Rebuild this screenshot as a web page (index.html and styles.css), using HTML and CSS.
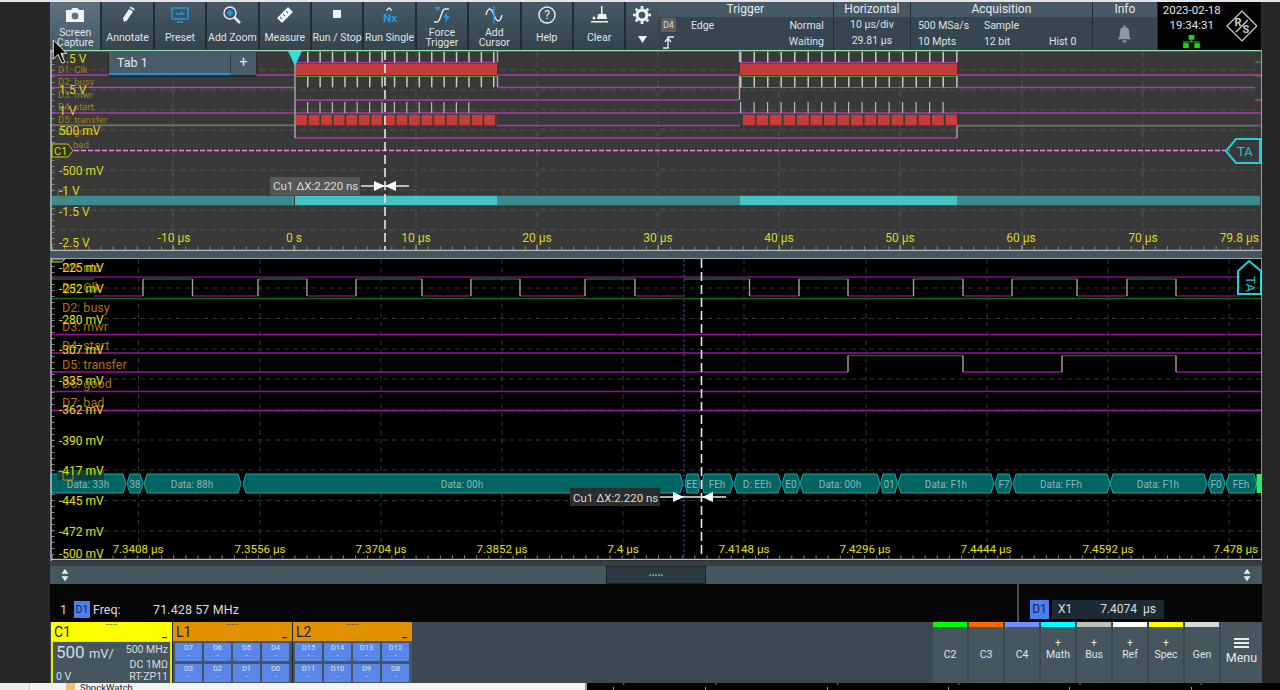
FILE: index.html
```html
<!DOCTYPE html>
<html lang="en">
<head>
<meta charset="utf-8">
<title>Oscilloscope</title>
<link rel="stylesheet" href="styles.css">
</head>
<body>
<div class="screen">
  <div class="topline"></div>
  <div class="middle">
    <main class="scope">
      <header class="toolbar">
        <button class="tool active"><svg class="ico" viewBox="0 0 20 18"><path class="fw" d="M1 4h5l1.500-2h5L14 4h5v12H1z"/><circle cx="10" cy="10" r="4" class="hole"/></svg><span>Screen<br>Capture</span></button>
        <button class="tool"><svg class="ico" viewBox="0 0 20 18"><path class="fw" d="M6 16l-1-4 6-9 4 2.500-6 9zM11.800 2l1-1.500 4 2.500-1 1.500z"/></svg><span class="one">Annotate</span></button>
        <button class="tool"><svg class="ico" viewBox="0 0 20 18"><rect x="2" y="2" width="16" height="11" rx="1" class="bl"/><path class="bl" d="M7 16h6M6 8h7l-2-2"/></svg><span class="one">Preset</span></button>
        <button class="tool"><svg class="ico" viewBox="0 0 20 18"><circle cx="8" cy="7" r="6" class="wl"/><path class="wl thick" d="M12 11l6 6"/><path class="bl thick" d="M5 7h6M8 4v6"/></svg><span class="one">Add Zoom</span></button>
        <button class="tool"><svg class="ico" viewBox="0 0 20 18"><path class="fw" d="M2 12L13 1l5 5L7 17z"/><path class="dk" d="M5 11l2 2M8 8l2 2M11 5l2 2"/></svg><span class="one">Measure</span></button>
        <button class="tool"><svg class="ico" viewBox="0 0 20 18"><rect x="6" y="4" width="8" height="8" class="fw"/></svg><span class="one">Run / Stop</span></button>
        <button class="tool"><svg class="ico" viewBox="0 0 20 20"><path class="wl" d="M6 5l3-3 3 3"/><text x="10" y="18" class="nx">Nx</text></svg><span class="one">Run Single</span></button>
        <button class="tool"><svg class="ico" viewBox="0 0 20 18"><path class="wl" d="M2 16h3c4 0 4-13 8-13h4"/><path class="bf" d="M2 1h7L5.500 5zM15 6l-4 6h3l-1 5 5-7h-3z"/></svg><span>Force<br>Trigger</span></button>
        <button class="tool"><svg class="ico" viewBox="0 0 20 18"><path class="wl" d="M2 9c2-8 5-8 8 0s6 8 8 0"/><path class="bl" d="M10 0v18"/></svg><span>Add<br>Cursor</span></button>
        <button class="tool"><svg class="ico" viewBox="0 0 20 18"><circle cx="10" cy="9" r="8" class="wl"/><text x="10" y="13" class="qm">?</text></svg><span class="one">Help</span></button>
        <button class="tool"><svg class="ico" viewBox="0 0 20 18"><path class="fw" d="M12 0h1.500v8H17l1 5H8l1-5h3zM2 15h17v1.500H2z"/><circle cx="5" cy="12" r="1.500" class="fw"/></svg><span class="one">Clear</span></button>
        <div class="gear">
          <svg class="gear-ico" viewBox="0 0 20 20"><circle cx="10" cy="10" r="5.500" class="gear-ring"/><path class="gear-teeth" d="M10 0v20M0 10h20M3 3l14 14M17 3L3 17"/></svg>
          <svg class="tri-ico" viewBox="0 0 12 10"><path class="fw" d="M1 1h10L6 9z"/></svg>
        </div>
        <section class="status w-trigger">
          <h2>Trigger</h2>
          <div class="trig-body">
            <span class="d4">D4</span><span>Edge</span><span class="right">Normal</span>
            <svg class="edge-ico" viewBox="0 0 14 14"><path class="wl" d="M1 13h5V2h6M3 7l3-4 3 4"/></svg><span></span><span class="right">Waiting</span>
          </div>
        </section>
        <section class="status w-horiz">
          <h2>Horizontal</h2>
          <div class="stack"><span>10 µs/div</span><span>29.81 µs</span></div>
        </section>
        <section class="status w-acq">
          <h2>Acquisition</h2>
          <div class="acq-body">
            <span>500 MSa/s</span><span>Sample</span><span></span>
            <span>10 Mpts</span><span>12 bit</span><span>Hist 0</span>
          </div>
        </section>
        <section class="status w-info">
          <h2>Info</h2>
          <svg class="bell" viewBox="0 0 16 20"><path class="grey" d="M1 15c2-2 2-5 2-8 0-3 2-5 5-5s5 2 5 5c0 3 0 6 2 8zM6 16h4v2.500H6zM7 0h2v3H7z"/></svg>
        </section>
        <section class="clock">
          <div class="clock-text">
            <span>2023-02-18</span><span>19:34:31</span>
            <svg class="net" viewBox="0 0 18 14"><path class="gn" d="M6 0h6v5H6zM0 9h6v5H0zM12 9h6v5h-6z"/><path class="gl" d="M9 5v2M0 7.500h18M3 8v2M15 8v2"/></svg>
          </div>
          <svg class="rs" viewBox="0 0 32 32"><path class="logo-line" d="M16 1l15 15-15 15L1 16z"/><text x="12" y="16" class="logo-t">R</text><text x="20" y="23" class="logo-t">S</text><path class="logo-line" d="M10 22L22 10"/></svg>
        </section>
      </header>

      <div class="overview-wrap">
        <svg class="plot overview" viewBox="50 50 1212 201">
          <rect x="50" y="50" width="1212" height="201" class="bg-grey"/>
          <path class="grid-o" d="M50 70h1212M50 90h1212M50 110h1212M50 130h1212M50 170h1212M50 190h1212M50 210h1212M50 230h1212M173 51v199M416 51v199M537 51v199M658 51v199M779 51v199M900 51v199M1022 51v199M1143 51v199"/>
          <path class="ruler-o" d="M52 248H1262"/>
          <path class="ticks-left" d="M53 52V250"/>
          <path class="major-o" d="M173 245v5M294 245v5M416 245v5M537 245v5M658 245v5M779 245v5M900 245v5M1022 245v5M1143 245v5"/>
          <path class="edge-top" d="M50 50.500H1262"/>
          <g class="ch-o">
            <text x="58" y="73">D1: Clk</text><text x="58" y="85">D2: busy</text><text x="58" y="98">D3: mwr</text><text x="58" y="110">D4: start</text><text x="58" y="123">D5: transfer</text><text x="58" y="135">D6: good</text><text x="73" y="148">bad</text>
          </g>
          <path class="pur" d="M51 75H295M497 75H740M957 75H1262M295 62.500H497M740 62.500H957M51 87.500H295M497 87.500H740M957 87.500H1255M295 100H739M1255 100H1262M51 113H1262M51 125.500H295M497 125.500H740M957 125.500H1262M295 138H957"/>
          <path class="grn-o" d="M51 87.500H295M295 76.500H497M740 76.500H957M740 87.500H957M51 125H295M957 126H1255M1255 62H1262M1255 76H1262"/>
          <path class="red" d="M296 69.500H497M740 69.500H957"/>
          <path class="red-d a" d="M296 120H497"/>
          <path class="red-d b" d="M743 120H957"/>
          <path class="tick-a" d="M307 57H497M307 82H497"/>
          <path class="tick-b" d="M740 57H957M740 82H957"/>
          <path class="tick-c" d="M307 107.500H480"/>
          <path class="tick-d" d="M740 107.500H945"/>
          <path class="vert" d="M295 62V138M497.500 51V62M497.500 76V87M739.500 51V62M739.500 76V100M957 51V62M957 76V87M957 126V138"/>
          <path class="pink" d="M74 150.500H1230"/>
          <path class="bus-dark" d="M52 200.500H294M497 200.500H740M957 200.500H1260"/>
          <path class="bus-lite" d="M295 200.500H497M740 200.500H957"/>
          <rect x="58" y="190" width="8" height="8" class="c2-mark"/>
          <path class="cursor" d="M385 51V250"/>
          <path class="trig" d="M288 51h14l-7 15z"/>
          <g class="axis-o">
            <text x="59" y="63">1.5 V</text><text x="59" y="94">1.5 V</text><text x="59" y="115">1 V</text><text x="59" y="135">500 mV</text><text x="59" y="175">-500 mV</text><text x="59" y="195">-1 V</text><text x="59" y="216">-1.5 V</text><text x="59" y="247">-2.5 V</text>
          </g>
          <g class="axis-o mid">
            <text x="174" y="242">-10 µs</text><text x="294" y="242">0 s</text><text x="416" y="242">10 µs</text><text x="537" y="242">20 µs</text><text x="658" y="242">30 µs</text><text x="779" y="242">40 µs</text><text x="900" y="242">50 µs</text><text x="1021" y="242">60 µs</text><text x="1143" y="242">70 µs</text>
          </g>
          <text x="1259" y="242" class="axis-o end">79.8 µs</text>
          <path class="flag-y" d="M52 144h16l5 6.500-5 6.500H52z"/>
          <text x="54" y="155" class="flag-yt">C1</text>
          <path class="flag-c" d="M1226 151l10-12h24v24h-24z"/>
          <text x="1237" y="156" class="flag-ct">TA</text>
          <rect x="270" y="177" width="90" height="18" class="cu-box"/>
          <text x="273" y="190" class="cu-text">Cu1 ΔX:2.220 ns</text>
          <path class="cu-line" d="M361 186h48"/>
          <path class="cu-arrow" d="M374 181l11 5-11 5zM396 181l-11 5 11 5z"/>
          <path class="frame" d="M51 50V251M1262 50V251M51 250.500H1262"/>
        </svg>
        <div class="tab"><span class="tab-name">Tab 1</span><span class="tab-add">+</span></div>
      </div>

      <div class="band"></div>

      <svg class="plot zoomed" viewBox="50 259 1212 302">
        <rect x="50" y="259" width="1212" height="302" class="bg-black"/>
        <path class="grid-z" d="M50 288H1262M50 318.500H1262M50 349H1262M50 379H1262M50 410H1262M50 440H1262M50 470H1262M50 500.500H1262M50 531H1262M138.500 259V557M260 259V557M381 259V557M502 259V557M623 259V557M744 259V557M866 259V557M987 259V557M1108 259V557M1229 259V557"/>
        <path class="ticks-left" d="M53 260V558"/>
        <path class="ruler-z" d="M52 557H1262"/>
        <g class="ch-z">
          <text x="62" y="272">D0: ntc</text><text x="62" y="292">D1: Clk</text><text x="62" y="312">D2: busy</text><text x="62" y="331">D3: mwr</text><text x="62" y="350">D4: start</text><text x="62" y="369">D5: transfer</text><text x="62" y="388">D6: good</text><text x="62" y="407">D7: bad</text>
        </g>
        <path class="pur-d" d="M51 277H1240M94 296H143M192.500 296H258M307 296H356M422 296H471M520 296H585M635 296H684M749.500 296H799M848 296H913.500M963 296H1012M1077 296H1127M1176 296H1241"/>
        <path class="pur-b" d="M51 334.500H1262M51 353H1262M51 372H848M963 372H1062M1176 372H1262M51 391.500H1262M51 410.500H1262"/>
        <path class="grn-z" d="M51 298.500H1262M51 279H94M143 279H192.500M258 279H307M356 279H422M471 279H520M585 279H635M684 279H749.500M799 279H848M913.500 279H963M1012 279H1077M1127 279H1176M848 355.500H963M1062 355.500H1176"/>
        <path class="edge-z" d="M143 279V296M192.500 279V296M258 279V296M307 279V296M356 279V296M422 279V296M471 279V296M520 279V296M585 279V296M635 279V296M749.500 279V296M799 279V296M848 279V296M913.500 279V296M963 279V296M1012 279V296M1077 279V296M1127 279V296M1176 279V296M848 355.500V372M963 355.500V372M1062 355.500V372M1176 355.500V372"/>
        <g class="bus">
          <path d="M51 474H123l3 9.500-3 9.500H51z"/>
          <path d="M130 474h10l3 9.500-3 9.500h-10l-3-9.500z"/>
          <path d="M147 474h91l3 9.500-3 9.500h-91l-3-9.500z"/>
          <path d="M246 474h434l3 9.500-3 9.500H246l-3-9.500z"/>
          <path d="M687 474h11l2 9.500-2 9.500h-11l-2-9.500z"/>
          <path d="M704 474h26l3 9.500-3 9.500h-26l-2-9.500z"/>
          <path d="M737 474h41l3 9.500-3 9.500h-41l-3-9.500z"/>
          <path d="M785 474h12l3 9.500-3 9.500h-12l-3-9.500z"/>
          <path d="M803 474h74l3 9.500-3 9.500h-74l-3-9.500z"/>
          <path d="M883 474h12l2.500 9.500-2.500 9.500h-12l-2.500-9.500z"/>
          <path d="M901 474h90l3 9.500-3 9.500h-90l-3-9.500z"/>
          <path d="M998 474h11l3 9.500-3 9.500h-11l-3-9.500z"/>
          <path d="M1016 474h91l3 9.500-3 9.500h-91l-3-9.500z"/>
          <path d="M1113 474h91l3 9.500-3 9.500h-91l-3-9.500z"/>
          <path d="M1211 474h11l3 9.500-3 9.500h-11l-3-9.500z"/>
          <path d="M1229 474h25l2.500 9.500-2.500 9.500h-25l-3-9.500z"/>
        </g>
        <path class="bus-end" d="M1259 474v19"/>
        <g class="bus-t">
          <text x="88" y="488">Data: 33h</text><text x="135" y="488">38</text><text x="192" y="488">Data: 88h</text><text x="462" y="488">Data: 00h</text><text x="692" y="488">EE</text><text x="717" y="488">FEh</text><text x="757" y="488">D: EEh</text><text x="791" y="488">E0</text><text x="840" y="488">Data: 00h</text><text x="889" y="488">01</text><text x="946" y="488">Data: F1h</text><text x="1004" y="488">F7</text><text x="1061" y="488">Data: FFh</text><text x="1158" y="488">Data: F1h</text><text x="1216" y="488">F0</text><text x="1241" y="488">FEh</text>
        </g>
        <rect x="57" y="470" width="47" height="10" class="l2-box"/>
        <path class="l2-mark" d="M63 472v8h10v-5"/>
        <path class="blue-cur" d="M684 259V557"/>
        <path class="cursor" d="M701.500 259V557"/>
        <g class="axis-z">
          <text x="59" y="272">-225 mV</text><text x="59" y="293">-252 mV</text><text x="59" y="324">-280 mV</text><text x="59" y="354">-307 mV</text><text x="59" y="385">-335 mV</text><text x="59" y="414">-362 mV</text><text x="59" y="445">-390 mV</text><text x="59" y="475">-417 mV</text><text x="59" y="505">-445 mV</text><text x="59" y="536">-472 mV</text><text x="59" y="558">-500 mV</text>
        </g>
        <g class="axis-zt mid">
          <text x="138" y="553">7.3408 µs</text><text x="260" y="553">7.3556 µs</text><text x="381" y="553">7.3704 µs</text><text x="502" y="553">7.3852 µs</text><text x="623" y="553">7.4 µs</text><text x="744" y="553">7.4148 µs</text><text x="865" y="553">7.4296 µs</text><text x="986" y="553">7.4444 µs</text><text x="1108" y="553">7.4592 µs</text>
        </g>
        <text x="1258" y="553" class="axis-zt end">7.478 µs</text>
        <path class="flag-c" d="M1249 261l12 10v23h-23v-23z"/>
        <text x="1249" y="281" class="flag-ct mid-t" transform="rotate(90 1246 281)">TA</text>
        <path class="flag-y" d="M52 259h13l-3 3H52z"/>
        <rect x="570" y="488" width="90" height="18" class="cu-box-z"/>
        <text x="573" y="502" class="cu-text">Cu1 ΔX:2.220 ns</text>
        <path class="cu-line" d="M660 497h66"/>
        <path class="cu-arrow" d="M673 492l11 5-11 5zM713 492l-11 5 11 5z"/>
        <path class="frame" d="M51 259V561M1262 259V561M51 559.500H1262"/>
      </svg>

      <div class="gap"></div>
      <div class="scrollbar">
        <svg class="updown" viewBox="0 0 10 16"><path class="ud" d="M1 6.500L5 1l4 5.500zM1 9.500L5 15l4-5.500z"/></svg>
        <div class="handle">.....</div>
        <svg class="updown" viewBox="0 0 10 16"><path class="ud" d="M1 6.500L5 1l4 5.500zM1 9.500L5 15l4-5.500z"/></svg>
      </div>

      <div class="results">
        <div class="res-left"><span class="idx">1</span><span class="badge">D1</span><span class="res-name">Freq:</span><span class="res-val">71.428 57 MHz</span></div>
        <div class="res-right">
          <span class="badge big">D1</span>
          <div class="x-box"><span>X1</span><span>7.4074&nbsp; µs</span></div>
        </div>
      </div>

      <div class="panel">
        <article class="c1">
          <div class="head yellow"><span class="dots">.....</span><b>C1</b><i>_</i></div>
          <div class="c1-body">
            <div class="c1-row"><span class="volts">500 <small>mV/</small></span><span>500 MHz</span></div>
            <div class="c1-row end"><span>DC 1MΩ</span></div>
            <div class="c1-row"><span>0 V</span><span>RT-ZP11</span></div>
          </div>
        </article>
        <article class="logic">
          <div class="head orange"><span class="dots">.....</span><b>L1</b><i>_</i></div>
          <div class="tiles">
            <span>D7<br>-</span><span>D6<br>-</span><span>D5<br>-</span><span>D4<br>-</span>
            <span>D3<br>-</span><span>D2<br>-</span><span>D1<br>-</span><span>D0<br>-</span>
          </div>
        </article>
        <article class="logic">
          <div class="head orange"><span class="dots">.....</span><b>L2</b><i>_</i></div>
          <div class="tiles">
            <span>D15<br>-</span><span>D14<br>-</span><span>D13<br>-</span><span>D12<br>-</span>
            <span>D11<br>-</span><span>D10<br>-</span><span>D9<br>-</span><span>D8<br>-</span>
          </div>
        </article>
        <div class="panel-fill"></div>
        <button class="src c-green">C2</button>
        <button class="src c-orange">C3</button>
        <button class="src c-blue">C4</button>
        <button class="src c-cyan"><em>+</em>Math</button>
        <button class="src c-grey"><em>+</em>Bus</button>
        <button class="src c-white"><em>+</em>Ref</button>
        <button class="src c-yellow"><em>+</em>Spec</button>
        <button class="src c-light">Gen</button>
        <button class="menu"><span class="bars"></span>Menu</button>
      </div>
    </main>
  </div>
  <footer class="desktop">
    <div class="explorer">
      <span class="pane"></span><span class="folder"></span><span class="file">ShockWatch</span>
    </div>
    <div class="ghost">
      <span>7.222 µs</span><span>7.236 µs</span><span>7.250 µs</span><span>7.354 µs</span><span>7.375 µs</span><span>7.417 µs</span>
    </div>
  </footer>
  <svg class="pointer" viewBox="0 0 16 26"><path d="M1 1v20l5-5 4 9 3-1-4-9h6z"/></svg>
</div>
</body>
</html>
```
FILE: styles.css
```css
* { box-sizing: border-box; }
html, body { margin: 0; height: 100%; background: #262626; overflow: hidden; }
body { font-family: Roboto, "Liberation Sans", sans-serif; }
.screen { position: relative; width: 1280px; height: 690px; display: flex; flex-direction: column; background: #282828; }
.topline { height: 2px; background: #e4e4e4; }
.middle { height: 681px; padding: 0 18px 0 50px; background: #272727; }
.scope { width: 1212px; height: 681px; display: flex; flex-direction: column; background: #060606; }

/* toolbar */
.toolbar { height: 48px; display: flex; background: #222c33; }
.tool { width: 50.4px; margin-right: 2px; height: 48px; padding: 0; border: 0; flex: none; position: relative; display: flex; flex-direction: column; align-items: center; background: linear-gradient(#465965, #34434d); color: #dfe5e8; font: 400 10.5px/10px Roboto, sans-serif; }
.tool.active { background: linear-gradient(#5d717e, #465965); }
.ico { width: 20px; height: 18px; margin-top: 4px; flex: none; }
.tool span { display: block; margin-top: 4px; white-space: nowrap; }
.tool span.one { margin-top: 9px; }
.fw { fill: #f0f2f4; }
.hole { fill: #5d717e; stroke: #f0f2f4; stroke-width: 1; }
.wl { fill: none; stroke: #e8ecef; stroke-width: 1.4; }
.bl { fill: none; stroke: #1f9be8; stroke-width: 1.5; }
.bf { fill: #1f9be8; }
.thick { stroke-width: 2.5; }
.dk { fill: none; stroke: #3a4a55; stroke-width: 1; }
.nx { fill: #1f9be8; font: 700 13px Roboto, sans-serif; text-anchor: middle; }
.qm { fill: #e8ecef; font: 400 12px Roboto, sans-serif; text-anchor: middle; }
.gear { width: 31.6px; flex: none; display: flex; flex-direction: column; align-items: center; background: linear-gradient(#465965, #34434d); }
.gear-ico { width: 18px; height: 18px; margin-top: 4px; }
.gear-ring { fill: none; stroke: #f0f2f4; stroke-width: 3.500; }
.gear-teeth { fill: none; stroke: #f0f2f4; stroke-width: 3; stroke-dasharray: 3 14 3; }
.tri-ico { width: 11px; height: 9px; margin-top: 11px; }
.status { flex: none; background: #36454f; border-right: 1px solid #222c33; color: #dde3e6; font-size: 10.5px; display: flex; flex-direction: column; }
.status h2 { margin: 0; height: 15px; font: 400 12px/15px Roboto, sans-serif; text-align: center; background: #465965; color: #e4e9ec; }
.w-trigger { width: 176px; }
.w-horiz { width: 77px; }
.w-acq { width: 182px; }
.w-info { width: 65px; align-items: stretch; }
.trig-body { flex: 1; display: grid; grid-template-columns: 30px 1fr auto; grid-template-rows: 1fr 1fr; align-items: center; padding: 0 9px 0 3px; }
.right { text-align: right; }
.d4 { width: 15px; height: 14px; background: #5f5f5f; color: #ddd; text-align: center; font-size: 9px; line-height: 14px; }
.edge-ico { width: 14px; height: 14px; margin-left: 1px; }
.stack { flex: 1; display: flex; flex-direction: column; justify-content: space-around; align-items: center; padding-bottom: 2px; }
.acq-body { flex: 1; display: grid; grid-template-columns: 66px 65px 1fr; grid-template-rows: 1fr 1fr; align-items: center; text-align: left; padding: 0 0 0 7px; }
.bell { width: 15px; height: 19px; margin: 8px auto 0; display: block; }
.grey { fill: #8f9a9f; }
.clock { width: 103.6px; flex: none; background: #030303; display: flex; align-items: center; padding-right: 4px; color: #dfe5e8; font-size: 11.5px; }
.clock-text { width: 68px; display: flex; flex-direction: column; align-items: center; gap: 2px; }
.clock-text span { line-height: 13px; }
.net { width: 17px; height: 13px; margin-top: 1px; }
.gn { fill: #12e012; }
.gl { fill: none; stroke: #12e012; stroke-width: 1; }
.rs { width: 32px; height: 32px; margin-left: auto; }
.logo-line { fill: none; stroke: #c8ced2; stroke-width: 1.3; }
.logo-t { fill: #c8ced2; font: 700 11px Roboto, sans-serif; text-anchor: middle; }

/* plots */
.overview-wrap { position: relative; height: 201px; }
.plot { display: block; width: 1212px; }
.overview { height: 201px; }
.zoomed { height: 302px; flex: none; }
.bg-grey { fill: #393939; }
.bg-black { fill: #000; }
.grid-o { fill: none; stroke: #555; stroke-width: 1; stroke-dasharray: 6 4; }
.grid-z { fill: none; stroke: #333; stroke-width: 1; stroke-dasharray: 5 4; }
.ruler-o { fill: none; stroke: #8a8a8a; stroke-width: 3; stroke-dasharray: 1 11.120; }
.ruler-z { fill: none; stroke: #8a8a8a; stroke-width: 3; stroke-dasharray: 1 11.120; }
.ticks-left { fill: none; stroke: #888; stroke-width: 3; stroke-dasharray: 1 5; }
.major-o { fill: none; stroke: #aaa; stroke-width: 1; }
.edge-top { fill: none; stroke: #8fe6ac; stroke-width: 1.4; }
.ch-o text { fill: #a17d22; font-size: 9.5px; }
.ch-z text { fill: #b3700c; font-size: 12.5px; }
.pur { fill: none; stroke: #a23ea6; stroke-width: 1.5; }
.grn-o { fill: none; stroke: #3f9a3f; stroke-width: 1; }
.red { fill: none; stroke: #c33b3b; stroke-width: 11.5; }
.red-d { fill: none; stroke: #c73c3c; stroke-width: 10.5; }
.red-d.a { stroke-dasharray: 10.900 1.650; }
.red-d.b { stroke-dasharray: 11.800 1.700; }
.tick-a, .tick-b { fill: none; stroke: #c8c8c8; stroke-width: 10.5; }
.tick-a { stroke-dasharray: 1.500 10.900; }
.tick-b { stroke-dasharray: 1.500 12; }
.tick-c, .tick-d { fill: none; stroke: #b8b8b8; stroke-width: 11; stroke-dasharray: 1.200 11.200; }
.tick-d { stroke-dasharray: 1.200 12.300; }
.vert { fill: none; stroke: #aaa; stroke-width: 1.4; }
.pink { fill: none; stroke: #ee82ee; stroke-width: 1.5; stroke-dasharray: 5 2; }
.bus-dark { fill: none; stroke: #3a8c8d; stroke-width: 9.5; }
.bus-lite { fill: none; stroke: #44c4c4; stroke-width: 9.5; }
.c2-mark { fill: none; stroke: #7d6a30; stroke-width: 1; }
.cursor { fill: none; stroke: #e6e6e6; stroke-width: 1.6; stroke-dasharray: 9 4; }
.blue-cur { fill: none; stroke: #2c4fa0; stroke-width: 1; stroke-dasharray: 3 2; }
.trig { fill: #35dde0; }
.axis-o text, .axis-o { fill: #d8d81f; font-size: 12px; }
.axis-z text, .axis-z { fill: #e0e000; font-size: 12px; }
.axis-zt text, .axis-zt { fill: #e0e000; font-size: 11.6px; }
.mid text { text-anchor: middle; }
.mid-t { text-anchor: middle; }
.end { text-anchor: end; }
.flag-y { fill: #33351a; stroke: #c8c81f; stroke-width: 1; }
.flag-yt { fill: #d8d81f; font-size: 11px; }
.flag-c { fill: none; stroke: #1fd0d6; stroke-width: 2; }
.flag-ct { fill: #1fc4c8; font-size: 13px; }
.cu-box { fill: #575757; }
.cu-box-z { fill: #2c2c2c; }
.cu-text { fill: #dcdcdc; font-size: 11.5px; }
.cu-line { fill: none; stroke: #e8e8e8; stroke-width: 1.4; }
.cu-arrow { fill: #fff; }
.frame { fill: none; stroke: #b9bec1; stroke-width: 1.5; }
.pur-d { fill: none; stroke: #7b0e7f; stroke-width: 1.6; }
.pur-b { fill: none; stroke: #9a109c; stroke-width: 1.5; }
.grn-z { fill: none; stroke: #0d6b0d; stroke-width: 1.4; }
.edge-z { fill: none; stroke: #a2a2a2; stroke-width: 1.4; }
.bus path { fill: #006463; stroke: #10abab; stroke-width: 1; }
.bus-end { fill: none; stroke: #2ee66a; stroke-width: 5; }
.bus-t text { fill: #8db7b6; font-size: 10px; text-anchor: middle; }
.l2-box { fill: #103f3f; }
.l2-mark { fill: none; stroke: #c68a18; stroke-width: 1; }

/* tab overlay */
.tab { position: absolute; left: 59px; top: 2px; width: 147px; height: 23px; display: flex; background: #4a5c68; box-shadow: 0 1px 2px #111; color: #e4e8eb; font-size: 12.5px; line-height: 21px; }
.tab-name { flex: 1; padding-left: 8px; border-bottom: 2px solid #1a92ea; border-right: 1px solid #333f47; }
.tab-add { width: 25px; text-align: center; font-size: 14px; }

.band { height: 8px; background: #45565f; border-bottom: 1px solid #9aa6ac; }
.gap { height: 5px; background: #333e45; flex: none; }
.scrollbar { height: 18px; flex: none; background: #45565f; display: flex; align-items: center; justify-content: space-between; padding: 0 10px 0 10px; position: relative; }
.updown { width: 10px; height: 14px; }
.ud { fill: #e8ecef; }
.handle { position: absolute; left: 556px; top: 0; width: 100px; height: 18px; background: #2d3a42; border: 1px solid #222; color: #b0bbc0; font-size: 10px; line-height: 11px; font-weight: 700; text-align: center; letter-spacing: 0; }

.results { height: 38px; flex: none; background: #060606; display: flex; justify-content: space-between; color: #d8dde0; font-size: 12.500px; }
.res-left { display: flex; align-items: center; padding-left: 10px; height: 17px; margin-top: 17px; }
.idx { width: 14px; }
.badge { width: 16px; height: 17px; background: #4d80ee; color: #12244c; text-align: center; font-size: 10.5px; line-height: 17px; }
.res-name { width: 60px; margin-left: 3px; }
.res-val { letter-spacing: .1px; }
.res-right { width: 245px; display: flex; align-items: flex-start; gap: 3px; padding: 16px 0 0 11px; border-left: 2px solid #4c4c4c; }
.badge.big { width: 19px; height: 19px; line-height: 19px; font-size: 12px; flex: none; }
.x-box { width: 112px; height: 19px; background: #1e2a32; display: flex; justify-content: space-between; padding: 0 8px 0 6px; line-height: 19px; font-size: 12px; }

/* bottom panel */
.panel { height: 61px; flex: none; background: #3a4952; display: flex; }
.c1 { width: 121px; margin-left: 1px; flex: none; display: flex; flex-direction: column; }
.logic { width: 120px; flex: none; display: flex; flex-direction: column; background: #45565f; border-left: 1px solid #1d272d; }
.head { height: 19px; position: relative; flex: none; display: flex; justify-content: space-between; align-items: flex-end; padding: 0 3px; color: #181818; }
.head b { font-weight: 400; font-size: 14px; line-height: 17px; }
.head i { font-style: normal; font-weight: 700; font-size: 11px; line-height: 14px; margin-right: 2px; }
.dots { position: absolute; left: 0; right: 0; top: -3px; text-align: center; font-size: 8px; line-height: 8px; font-weight: 700; color: #444; }
.yellow { background: #ffff00; }
.orange { background: #e19000; }
.c1-body { flex: 1; background: #45565f; border: 2px solid #e8e800; border-top-width: 1px; display: flex; flex-direction: column; justify-content: space-between; padding: 2px 2px 3px 3px; color: #d6dde0; font-size: 10.5px; line-height: 12px; }
.c1-row { display: flex; justify-content: space-between; align-items: flex-start; }
.c1-row.end { justify-content: flex-end; margin-top: -3px; }
.volts { font-size: 17px; line-height: 16px; }
.volts small { font-size: 13px; }
.tiles { flex: 1; display: grid; grid-template-columns: repeat(4, 27px); grid-template-rows: 18px 18px; gap: 2.500px 2px; padding: 2px 0 0 2px; }
.tiles span { background: #5a86ea; color: #dfe8fb; font-size: 7.5px; line-height: 8px; text-align: center; padding-top: 1px; }
.panel-fill { flex: 1; }
.src { width: 34px; margin-right: 2px; flex: none; padding: 0 0 22px; border: 0; border-top: 5px solid #888; background: #45565f; color: #dfe5e8; font: 400 10.5px/12px Roboto, sans-serif; display: flex; flex-direction: column; align-items: center; justify-content: flex-end; }
.src em { font-style: normal; line-height: 12px; }
.c-green { border-top-color: #00ff00; }
.c-orange { border-top-color: #ff6600; }
.c-blue { border-top-color: #7090ff; }
.c-cyan { border-top-color: #00ffff; }
.c-grey { border-top-color: #c0c0c0; }
.c-white { border-top-color: #ffffff; }
.c-yellow { border-top-color: #ffff00; }
.c-light { border-top-color: #d8d8d8; }
.menu { width: 41px; flex: none; padding: 16px 0 0; border: 0; background: #45565f; color: #e4e9ec; font: 400 12.5px/14px Roboto, sans-serif; display: flex; flex-direction: column; align-items: center; justify-content: flex-start; gap: 3px; }
.bars { display: block; width: 15px; height: 10px; border-top: 2px solid #e8ecef; border-bottom: 2px solid #e8ecef; background: linear-gradient(transparent 2px, #e8ecef 2px, #e8ecef 4px, transparent 4px); }

/* desktop behind the window */
.desktop { height: 7px; display: flex; overflow: hidden; }
.explorer { width: 587px; background: #f4f4f4; border-right: 2px solid #9a9a9a; display: flex; color: #222; font-size: 9.5px; line-height: 10px; }
.pane { width: 30px; margin-right: 36px; border-right: 1px solid #cfcfcf; background: #ececec; }
.folder { width: 9px; height: 7px; background: #e8c46a; margin-right: 5px; }
.ghost { flex: 1; background: #000; color: #b0740f; font-size: 11px; line-height: 12px; display: flex; gap: 79px; padding-left: 5px; }
.ghost span { position: relative; height: 12px; margin-top: -9px; white-space: nowrap; }
.ghost span:first-child { margin-right: -29px; }
.ghost span::after { content: ""; position: absolute; left: 50%; top: 13px; width: 1px; height: 3px; background: #999; }

/* mouse pointer over everything */
.pointer { position: absolute; left: 52px; top: 39px; width: 16px; height: 25px; }
.pointer path { fill: #0a0a0a; stroke: #e8e8e8; stroke-width: 1; }
```
